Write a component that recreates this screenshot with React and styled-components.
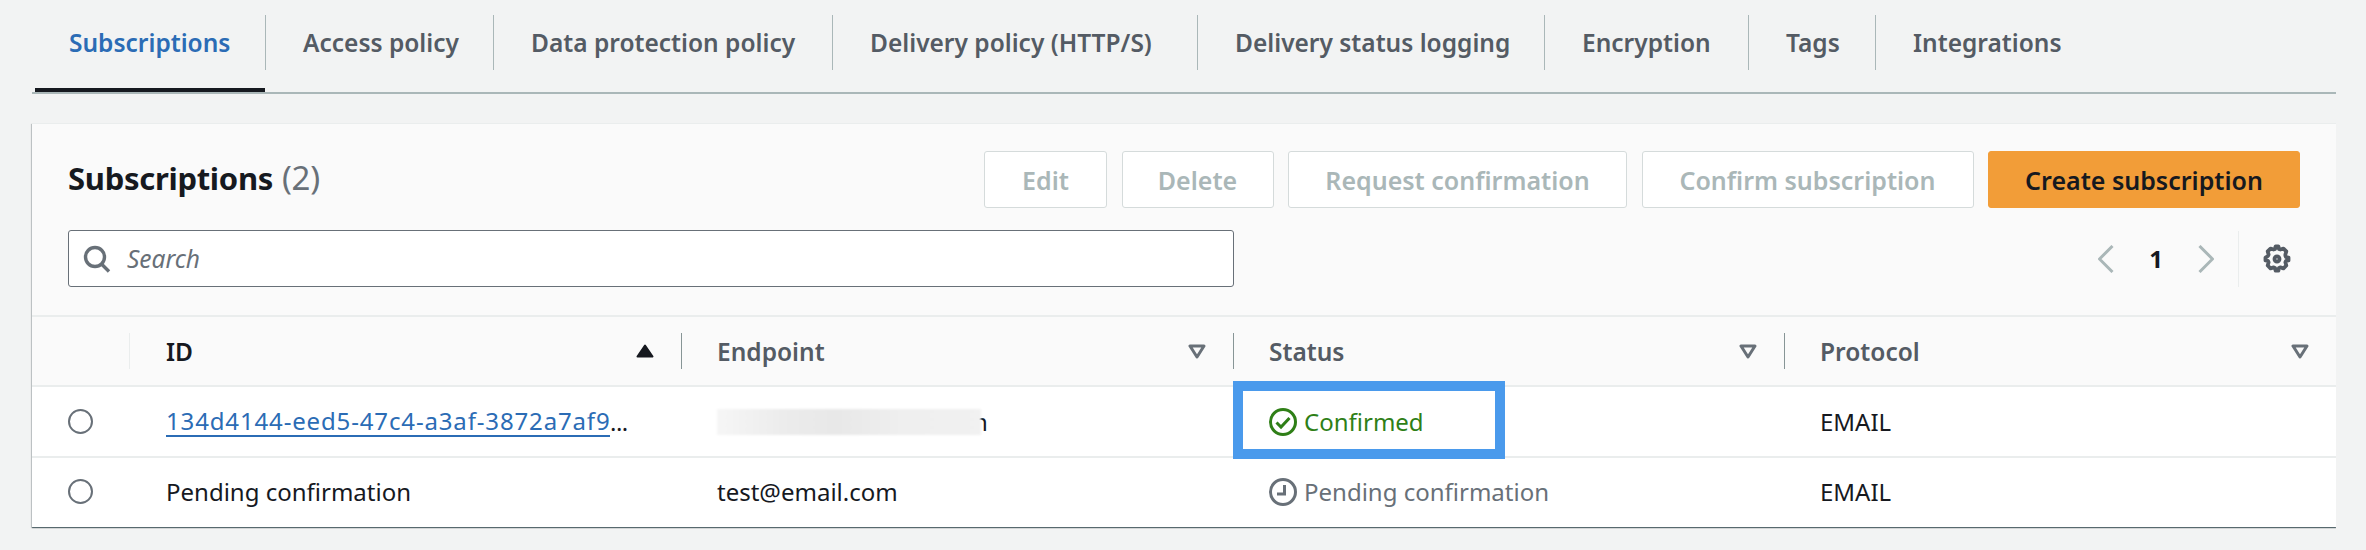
import styled, { createGlobalStyle } from 'styled-components';

const GlobalStyle = createGlobalStyle`
  html, body {
    margin: 0;
    padding: 0;
    background-color: #f2f3f3;
    font-family: "Noto Sans", "Open Sans", sans-serif;
    color: #16191f;
  }
`;

const Page = styled.div`
  width: 2304px;
  height: 550px;
  padding-left: 32px;
  overflow: hidden;
`;

const TabBar = styled.div`
  display: flex;
  height: 92px;
  border-bottom: 2px solid #aab7b8;
`;

const Tab = styled.div`
  position: relative;
  width: ${(props) => props.$width}px;
  height: 92px;
  padding-top: 15px;
  box-sizing: border-box;
  &::after {
    content: '';
    display: ${(props) => (props.$active ? 'block' : 'none')};
    position: absolute;
    left: 3px;
    right: 1px;
    bottom: 0;
    height: 4px;
    background-color: #16191f;
  }
`;

const TabLabel = styled.div`
  display: flex;
  align-items: center;
  height: 55px;
  padding-left: 37px;
  box-sizing: border-box;
  font-size: 24.5px;
  font-weight: 600;
  white-space: nowrap;
  color: ${(props) => (props.$active ? '#2b6cb5' : '#545b64')};
  border-right: ${(props) => (props.$last ? 'none' : '1px solid #aab7b8')};
`;

const Card = styled.div`
  margin-top: 29px;
  background-color: #ffffff;
  border-top: 1px solid #eaeded;
  box-shadow: 0 1px 1px 0 rgba(0, 28, 36, 0.5), 1px 1px 1px 0 rgba(0, 28, 36, 0.15),
    -1px 1px 1px 0 rgba(0, 28, 36, 0.15);
`;

const CardHeader = styled.div`
  padding: 27px 36px 28px;
  background-color: #fafafa;
`;

const TitleRow = styled.div`
  display: flex;
  align-items: center;
  justify-content: space-between;
  height: 57px;
  margin-bottom: 22px;
`;

const Title = styled.h2`
  margin: 0 0 4px;
  font-size: 31px;
  font-weight: 700;
  letter-spacing: -0.3px;
`;

const Count = styled.span`
  font-size: 33px;
  font-weight: 400;
  color: #687078;
  margin-left: 9px;
`;

const Actions = styled.div`
  display: flex;
  gap: 14.5px;
`;

const Button = styled.div`
  display: flex;
  align-items: center;
  justify-content: center;
  width: ${(props) => props.$width}px;
  height: 57px;
  box-sizing: border-box;
  border-radius: 3px;
  font-size: 25px;
  font-weight: 600;
  white-space: nowrap;
  border: 1px solid ${(props) => (props.$primary ? '#f29d38' : '#d5dbdb')};
  background-color: ${(props) => (props.$primary ? '#f29d38' : '#ffffff')};
  color: ${(props) => (props.$primary ? '#16191f' : '#aab7b8')};
`;

const SearchRow = styled.div`
  display: flex;
  align-items: center;
  justify-content: space-between;
`;

const SearchBox = styled.div`
  display: flex;
  align-items: center;
  gap: 16px;
  width: 1166px;
  height: 57px;
  padding-left: 14px;
  box-sizing: border-box;
  background-color: #ffffff;
  border: 1px solid #687078;
  border-radius: 3px;
`;

const SearchText = styled.span`
  font-size: 24.5px;
  font-style: italic;
  color: #687078;
`;

const Pagination = styled.div`
  display: flex;
  align-items: center;
  height: 57px;
  margin-right: 8px;
`;

const PageNumber = styled.span`
  width: 84px;
  text-align: center;
  font-size: 24px;
  font-weight: 700;
`;

const PagerDivider = styled.div`
  width: 1px;
  height: 56px;
  margin: 0 23px 0 24px;
  background-color: #eaeded;
`;

const TableRow = styled.div`
  display: grid;
  grid-template-columns: 97px 552px 552px 551px 552px;
  height: ${(props) => props.$height}px;
  padding-bottom: ${(props) => (props.$tight ? 2 : 0)}px;
  border-top: 2px solid #eaeded;
  box-sizing: border-box;
  background-color: ${(props) => (props.$head ? '#fafafa' : '#ffffff')};
`;

const HeadCell = styled.div`
  display: flex;
  align-items: center;
  padding-right: 27px;
  font-size: 24.5px;
  font-weight: 600;
  color: ${(props) => (props.$sorted ? '#16191f' : '#545b64')};
`;

const HeadDivider = styled.div`
  flex: none;
  width: 1px;
  height: 36px;
  margin-right: ${(props) => (props.$light ? 36 : 35)}px;
  background-color: ${(props) => (props.$light ? '#eaeded' : '#879596')};
`;

const HeadLabel = styled.span`
  flex: 1;
`;

const Cell = styled.div`
  position: relative;
  display: flex;
  align-items: center;
  padding-left: ${(props) => (props.$first ? 37 : 36)}px;
  font-size: 24px;
  white-space: nowrap;
`;

const RadioCell = styled.div`
  display: flex;
  align-items: center;
  justify-content: center;
  padding-right: 1px;
`;

const Radio = styled.span`
  width: 21px;
  height: 21px;
  border: 2px solid #687078;
  border-radius: 50%;
  background-color: #ffffff;
`;

const IdLink = styled.span`
  display: inline-block;
  width: 444px;
  line-height: 28px;
  letter-spacing: 0.85px;
  color: #2b6cb5;
  border-bottom: 2px solid #2b6cb5;
`;

const Ellipsis = styled.span`
  letter-spacing: -0.5px;
`;

const BlurBlock = styled.span`
  position: relative;
  z-index: 1;
  display: inline-block;
  width: 264px;
  height: 26px;
  background: linear-gradient(90deg, #f6f6f6 0%, #ececec 25%, #e8e8e8 45%, #efefef 70%, #f1f1f1 100%);
  filter: blur(1px);
`;

const HiddenTail = styled.span`
  margin-left: -8px;
`;

const Status = styled.span`
  display: flex;
  align-items: center;
  gap: 7px;
  color: ${(props) => (props.$ok ? '#2f7f17' : '#687078')};
`;

const Highlight = styled.div`
  position: absolute;
  top: -6px;
  left: 0;
  width: 272px;
  height: 78px;
  box-sizing: border-box;
  border: 10px solid #4a9aec;
  pointer-events: none;
`;

const SearchIcon = () => (
  <svg width="28" height="28" viewBox="0 0 28 28" fill="none" stroke="#687078" strokeWidth="3.4">
    <circle cx="12" cy="12" r="9.5" />
    <path d="M18.5 19 26 26.5" />
  </svg>
);

const Chevron = ({ flip }) => (
  <svg width="16" height="28" viewBox="0 0 16 28" fill="none" stroke="#aab7b8" strokeWidth="3">
    <path d={flip ? 'M1.5 1 14.5 14 1.5 27' : 'M14.5 1 1.5 14 14.5 27'} />
  </svg>
);

const GearIcon = () => (
  <svg width="30" height="30" viewBox="-1.5 -1.5 19 19" fill="none" stroke="#545b64" strokeWidth="2.4" strokeLinejoin="round">
    <path d="M13.3 5.2l.6-2-1.8-1.8-2 .6c-.3-.2-.6-.3-.9-.4L8.9 0H7.1l-.3 1.6c-.3.1-.6.2-.9.4l-2-.6-1.8 1.8.6 2c-.2.3-.3.6-.4.9L.7 7.1v1.8l1.6.3c.1.3.2.6.4.9l-.6 2 1.8 1.8 2-.6c.3.2.6.3.9.4l.3 1.6h1.8l.3-1.6c.3-.1.6-.2.9-.4l2 .6 1.8-1.8-.6-2c.2-.3.3-.6.4-.9l1.6-.3V7.1l-1.6-.3c-.1-.3-.2-.6-.4-.9z" />
    <circle cx="8" cy="8" r="1.6" />
  </svg>
);

const SortIcon = ({ asc }) =>
  asc ? (
    <svg width="18" height="14" viewBox="0 0 18 14" fill="#16191f" stroke="#16191f" strokeWidth="2" strokeLinejoin="round">
      <path d="M9 1.5 16.5 12.5H1.5Z" />
    </svg>
  ) : (
    <svg width="18" height="15" viewBox="0 0 18 15" fill="none" stroke="#687078" strokeWidth="3" strokeLinejoin="round">
      <path d="M2 2H16L9 13Z" />
    </svg>
  );

const CheckIcon = () => (
  <svg width="28" height="28" viewBox="0 0 28 28" fill="none" stroke="#2f7f17" strokeWidth="3">
    <circle cx="14" cy="14" r="12.5" />
    <path d="M7.5 14.5 12 19 20.5 10" />
  </svg>
);

const ClockIcon = () => (
  <svg width="28" height="28" viewBox="0 0 28 28" fill="none" stroke="#687078" strokeWidth="3">
    <circle cx="14" cy="14" r="12.5" />
    <path d="M15.5 7V16H8" />
  </svg>
);

const tabs = [
  { label: 'Subscriptions', width: 234, active: true },
  { label: 'Access policy', width: 228 },
  { label: 'Data protection policy', width: 339 },
  { label: 'Delivery policy (HTTP/S)', width: 365 },
  { label: 'Delivery status logging', width: 347 },
  { label: 'Encryption', width: 204 },
  { label: 'Tags', width: 127 },
  { label: 'Integrations', width: 260, last: true },
];

const buttons = [
  { label: 'Edit', width: 123 },
  { label: 'Delete', width: 152 },
  { label: 'Request confirmation', width: 339 },
  { label: 'Confirm subscription', width: 332 },
  { label: 'Create subscription', width: 312, primary: true },
];

const App = () => {
  return (
    <Page>
      <GlobalStyle />
      <TabBar>
        {tabs.map((tab) => (
          <Tab key={tab.label} $width={tab.width} $active={tab.active}>
            <TabLabel $active={tab.active} $last={tab.last}>{tab.label}</TabLabel>
          </Tab>
        ))}
      </TabBar>
      <Card>
        <CardHeader>
          <TitleRow>
            <Title>
              Subscriptions<Count>(2)</Count>
            </Title>
            <Actions>
              {buttons.map((button) => (
                <Button key={button.label} $width={button.width} $primary={button.primary}>
                  {button.label}
                </Button>
              ))}
            </Actions>
          </TitleRow>
          <SearchRow>
            <SearchBox>
              <SearchIcon />
              <SearchText>Search</SearchText>
            </SearchBox>
            <Pagination>
              <Chevron />
              <PageNumber>1</PageNumber>
              <Chevron flip />
              <PagerDivider />
              <GearIcon />
            </Pagination>
          </SearchRow>
        </CardHeader>
        <TableRow $head $height={70}>
          <div />
          <HeadCell $sorted>
            <HeadDivider $light />
            <HeadLabel>ID</HeadLabel>
            <SortIcon asc />
          </HeadCell>
          <HeadCell>
            <HeadDivider />
            <HeadLabel>Endpoint</HeadLabel>
            <SortIcon />
          </HeadCell>
          <HeadCell>
            <HeadDivider />
            <HeadLabel>Status</HeadLabel>
            <SortIcon />
          </HeadCell>
          <HeadCell>
            <HeadDivider />
            <HeadLabel>Protocol</HeadLabel>
            <SortIcon />
          </HeadCell>
        </TableRow>
        <TableRow $height={71}>
          <RadioCell><Radio /></RadioCell>
          <Cell $first>
            <IdLink>134d4144-eed5-47c4-a3af-3872a7af9</IdLink>
            <Ellipsis>...</Ellipsis>
          </Cell>
          <Cell>
            <BlurBlock />
            <HiddenTail>n</HiddenTail>
          </Cell>
          <Cell>
            <Status $ok>
              <CheckIcon />
              Confirmed
            </Status>
            <Highlight />
          </Cell>
          <Cell>EMAIL</Cell>
        </TableRow>
        <TableRow $height={71} $tight>
          <RadioCell><Radio /></RadioCell>
          <Cell $first>Pending confirmation</Cell>
          <Cell>test@email.com</Cell>
          <Cell>
            <Status>
              <ClockIcon />
              Pending confirmation
            </Status>
          </Cell>
          <Cell>EMAIL</Cell>
        </TableRow>
      </Card>
    </Page>
  );
};

export default App;
